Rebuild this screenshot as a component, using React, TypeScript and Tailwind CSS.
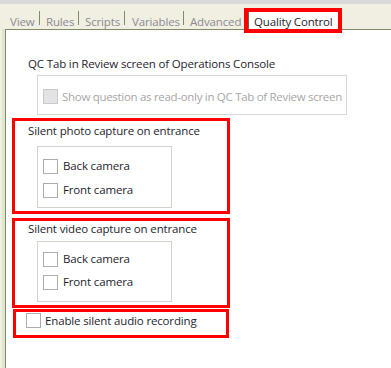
import React from "react";

const OLIVE = "bg-[#7f8b6a]";

function Box({ disabled }: { disabled?: boolean }) {
  return (
    <span
      className={
        disabled
          ? "block h-[15px] w-[15px] shrink-0 border border-[#c9c9c9] bg-[#e3e3e3]"
          : "block h-[15px] w-[15px] shrink-0 border border-[#adadad] bg-white"
      }
    />
  );
}

function Check({ label }: { label: string }) {
  return (
    <div className="flex h-[16px] items-center gap-[5px]">
      <Box />
      <span className="whitespace-nowrap leading-[16px]">{label}</span>
    </div>
  );
}

function CameraGroup({ pt, gap }: { pt: string; gap: string }) {
  return (
    <div className={`flex flex-col border border-[#d3d3cc] pl-[5px] ${pt} ${gap}`}>
      <Check label="Back camera" />
      <Check label="Front camera" />
    </div>
  );
}

export default function App() {
  return (
    <div
      className="flex h-[368px] w-[391px] flex-col overflow-hidden bg-[#f1efe2] text-[11.5px] tracking-[-0.15px] text-[#1e1e2e]"
      style={{ fontFamily: '"Open Sans", "Noto Sans", Arial, sans-serif' }}
    >
      <div className="h-[4px] bg-[#d9d9d9]" />

      {/* tab strip */}
      <div className="relative z-10 flex h-[25px] items-start text-[#8b8b93]">
        <span className="ml-[10px] mt-[10px] w-[29px] whitespace-nowrap leading-[16px]">View</span>
        <span className={`mt-[7px] h-[14px] w-px ${OLIVE}`} />
        <span className="ml-[6px] mt-[10px] w-[32px] whitespace-nowrap leading-[16px]">Rules</span>
        <span className={`mt-[7px] h-[14px] w-px ${OLIVE}`} />
        <span className="ml-[6px] mt-[10px] w-[39px] whitespace-nowrap leading-[16px]">Scripts</span>
        <span className={`mt-[7px] h-[14px] w-px ${OLIVE}`} />
        <span className="ml-[7px] mt-[10px] w-[51px] whitespace-nowrap leading-[16px]">Variables</span>
        <span className={`mt-[7px] h-[14px] w-px ${OLIVE}`} />
        <span className="ml-[6px] mt-[10px] w-[54px] whitespace-nowrap leading-[16px]">Advanced</span>
        <div className="mt-[4px] h-[25px] w-[98px] border-[4px] border-[#ff0000] bg-white">
          <div className="h-full whitespace-nowrap border-l border-[#5f6b4e] pl-[5px] pt-[2px] leading-[16px] text-[#1e1e2e]">
            Quality Control
          </div>
        </div>
      </div>

      <div className="flex flex-1">
        <div className="ml-[2px] w-[3px] bg-[#e1e5cb]" />
        <div className="flex flex-1 flex-col border-l border-t border-[#7f8b6a] bg-white">
          <div className="whitespace-nowrap pl-[22px] pt-[26px] leading-[16px]">
            QC Tab in Review screen of Operations Console
          </div>

          <div className="ml-[31px] mt-[3px] flex h-[40px] w-[310px] items-center gap-[4px] border border-[#d8d8d2] pl-[5px] pt-[3px] text-[#a6a6a6]">
            <Box disabled />
            <span className="whitespace-nowrap leading-[16px] tracking-[-0.3px]">
              Show question as read-only in QC Tab of Review screen
            </span>
          </div>

          <div className="ml-[6px] mt-[3px] h-[96px] w-[218px] border-[3px] border-[#ff0000]">
            <div className="whitespace-nowrap pl-[13px] pt-[2px] leading-[16px]">
              Silent photo capture on entrance
            </div>
            <div className="ml-[22px] mt-[7px] h-[62px] w-[135px]">
              <CameraGroup pt="h-full pt-[11px]" gap="gap-[8px]" />
            </div>
          </div>

          <div className="ml-[6px] mt-[4px] h-[90px] w-[218px] border-[3px] border-[#ff0000]">
            <div className="whitespace-nowrap pl-[13px] leading-[16px]">
              Silent video capture on entrance
            </div>
            <div className="ml-[22px] mt-[4px] h-[61px] w-[135px]">
              <CameraGroup pt="h-full pt-[9px]" gap="gap-[7px]" />
            </div>
          </div>

          <div className="ml-[7px] mt-[1px] flex h-[29px] w-[216px] items-start gap-[4px] border-[3px] border-[#ff0000] pl-[10px] pt-[1px]">
            <Box />
            <span className="whitespace-nowrap leading-[16px]">Enable silent audio recording</span>
          </div>
        </div>
      </div>
    </div>
  );
}
